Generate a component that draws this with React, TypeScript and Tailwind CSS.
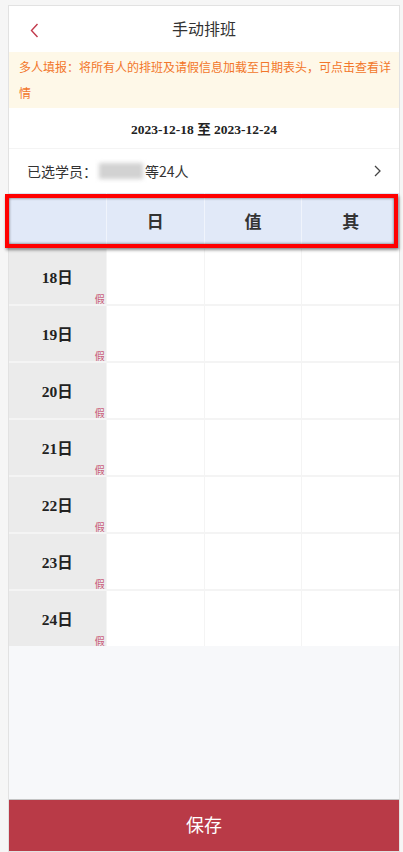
import React from "react";

const cjk = { fontFamily: '"Noto Sans CJK SC", "Noto Sans", sans-serif' };
const serif = { fontFamily: '"Liberation Serif", "Noto Sans CJK SC", serif' };

const days = ["18日", "19日", "20日", "21日", "22日", "23日", "24日"];

export default function App() {
  return (
    <div className="w-[403px] h-[852px] bg-[#f6f6f6] pt-[5px] pl-[8px]" style={cjk}>
      <div className="w-[392px] h-[847px] border border-[#e2e2e2] flex flex-col bg-white">
        {/* Header */}
        <div className="h-[46px] shrink-0 relative flex items-center justify-center bg-white">
          <div className="absolute left-[21px] top-[17px]">
            <svg width="9" height="15" viewBox="0 0 9 15">
              <polyline points="7.5,1 1.5,7.5 7.5,14" fill="none" stroke="#c23a4c" strokeWidth="1.4" />
            </svg>
          </div>
          <span className="text-[16px] text-[#333] leading-none mb-[3px]">手动排班</span>
        </div>
        {/* Notice */}
        <div className="h-[56px] shrink-0 bg-[#fef8e8] pl-[10px] pr-[2px] py-[2px] text-[12px] leading-[26px] text-[#f2762a]">
          多人填报：将所有人的排班及请假信息加载至日期表头，可点击查看详情
        </div>
        {/* Date range */}
        <div className="h-[41px] shrink-0 flex items-center justify-center pt-[5px] border-b border-[#f4f4f4] bg-white">
          <span className="text-[13.5px] font-bold text-[#222]" style={serif}>
            2023-12-18 至 2023-12-24
          </span>
        </div>
        {/* Selected students */}
        <div className="h-[44px] shrink-0 flex items-center pl-[18px] pr-[18px] bg-white">
          <span className="text-[14px] text-[#333]">已选学员：</span>
          <div className="w-[44px] h-[16px] bg-[#d2d2d2] blur-[2px] mx-[2px]" />
          <span className="text-[14px] text-[#333]">等24人</span>
          <div className="flex-1" />
          <svg width="7" height="12" viewBox="0 0 7 12">
            <polyline points="1,1 6,6 1,11" fill="none" stroke="#444" strokeWidth="1.3" />
          </svg>
        </div>
        {/* Table header */}
        <div className="h-[55px] shrink-0 relative flex bg-[#e1e9f8]">
          <div className="flex-1 border-r border-[#f0f4fc]" />
          {["日", "值", "其"].map((t, i) => (
            <div
              key={t}
              className={`flex-1 flex items-center justify-center text-[17px] font-bold text-[#333] ${i < 2 ? "border-r border-[#f0f4fc]" : ""}`}
            >
              {t}
            </div>
          ))}
          <div className="absolute left-[-4px] right-[1px] top-[1px] bottom-0 border-[4px] border-[#ff0000] shadow-[1px_2px_3px_rgba(0,0,0,0.45),inset_0_0_3px_rgba(0,0,0,0.6)] z-10" />
        </div>
        {/* Table body */}
        <div className="flex flex-col gap-[2px] pt-[1px] bg-[#f4f4f4] shrink-0">
          {days.map((d) => (
            <div key={d} className="h-[55px] flex">
              <div className="flex-1 relative bg-[#ebebeb] flex items-center justify-center border-r border-[#f4f4f4]">
                <span className="text-[15.5px] font-bold text-[#222] mt-[2px]" style={serif}>
                  {d}
                </span>
                <span className="absolute right-[1px] bottom-[-1px] text-[10px] leading-[12px] text-[#c95a78]">假</span>
              </div>
              <div className="flex-1 bg-white border-r border-[#f4f4f4]" />
              <div className="flex-1 bg-white border-r border-[#f4f4f4]" />
              <div className="flex-1 bg-white" />
            </div>
          ))}
        </div>
        <div className="flex-1 bg-[#f7f8fa]" />
        {/* Save button */}
        <div className="h-[52px] shrink-0 border-t border-[#c4c4c4] bg-[#b93a47] flex items-center justify-center">
          <span className="text-[18px] text-white mb-[3px]">保存</span>
        </div>
      </div>
    </div>
  );
}
